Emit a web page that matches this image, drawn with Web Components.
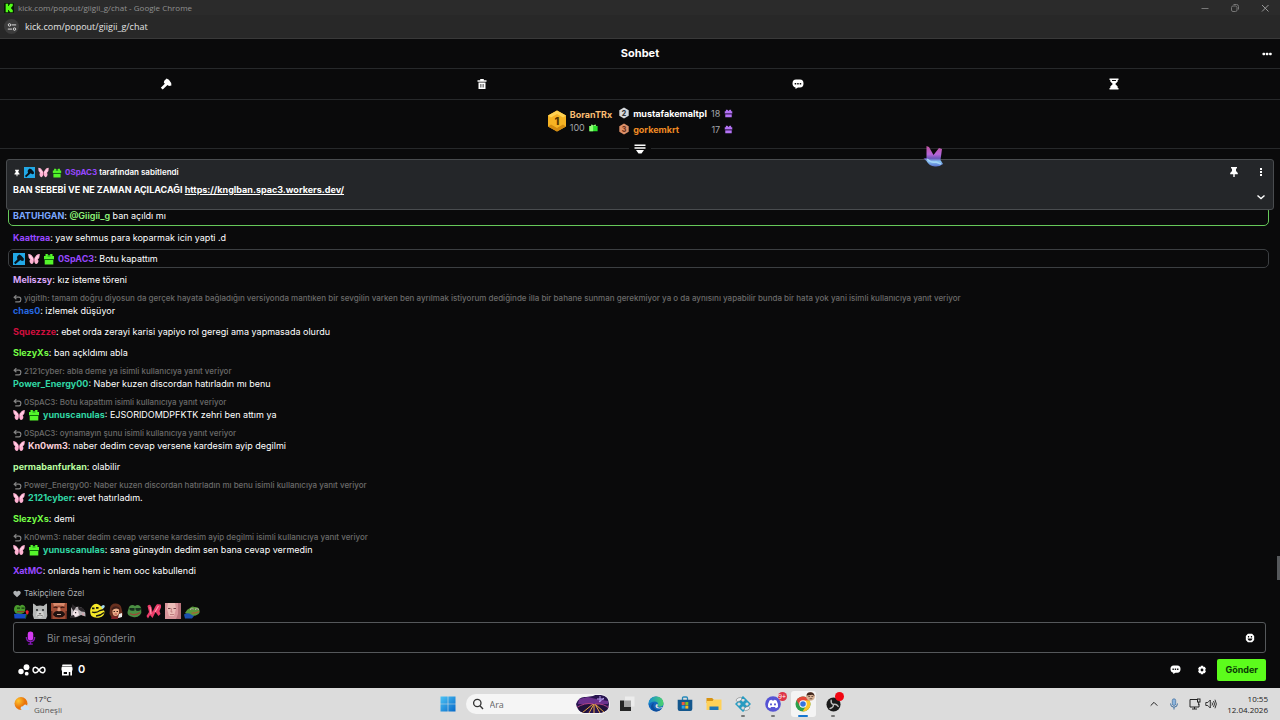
<!DOCTYPE html>
<html lang="tr">
<head>
<meta charset="utf-8">
<title>kick.com/popout/giigii_g/chat</title>
<style>
html, body { margin: 0; height: 100%; }
body { display: flex; flex-direction: column; min-height: 100vh; overflow: hidden; background: #0a0a0b; color: #fff; font-family: Inter, sans-serif; font-size: 9px; line-height: 13px; }
chat-feed { flex: 1; }
</style>
</head>
<body>
<window-chrome></window-chrome>
<chat-header>Sohbet</chat-header>
<mod-bar></mod-bar>
<gift-board></gift-board>
<pinned-message user="0SpAC3" href="https://knglban.spac3.workers.dev/">BAN SEBEBİ VE NE ZAMAN AÇILACAĞI</pinned-message>
<chat-feed>
  <chat-message user="BATUHGAN" color="#7aa7ff" frame="mention"><b>@Giigii_g</b> ban açıldı mı</chat-message>
  <chat-message user="Kaattraa" color="#9747ff">yaw sehmus para koparmak icin yapti .d</chat-message>
  <chat-message user="0SpAC3" color="#9747ff" badges="mod butterfly gift" frame="plain">Botu kapattım</chat-message>
  <chat-message user="Meliszsy" color="#d9a6f7">kız isteme töreni</chat-message>
  <chat-message user="chas0" color="#2668e0" reply="yigitlh: tamam doğru diyosun da gerçek hayata bağladığın versiyonda mantıken bir sevgilin varken ben ayrılmak istiyorum dediğinde illa bir bahane sunman gerekmiyor ya o da aynısını yapabilir bunda bir hata yok yani isimli kullanıcıya yanıt veriyor">izlemek düşüyor</chat-message>
  <chat-message user="Squezzze" color="#d00f3e">ebet orda zerayi karisi yapiyo rol geregi ama yapmasada olurdu</chat-message>
  <chat-message user="SlezyXs" color="#75fd46">ban açkldımı abla</chat-message>
  <chat-message user="Power_Energy00" color="#31d6a4" reply="2121cyber: abla deme ya isimli kullanıcıya yanıt veriyor">Naber kuzen discordan hatırladın mı benu</chat-message>
  <chat-message user="yunuscanulas" color="#31d6a4" badges="butterfly gift" reply="0SpAC3: Botu kapattım isimli kullanıcıya yanıt veriyor">EJSORIDOMDPFKTK zehri ben attım ya</chat-message>
  <chat-message user="Kn0wm3" color="#fbcfd8" badges="butterfly" reply="0SpAC3: oynamayın şunu isimli kullanıcıya yanıt veriyor">naber dedim cevap versene kardesim ayip degilmi</chat-message>
  <chat-message user="permabanfurkan" color="#b9fda0">olabilir</chat-message>
  <chat-message user="2121cyber" color="#31d6a4" badges="butterfly" reply="Power_Energy00: Naber kuzen discordan hatırladın mı benu isimli kullanıcıya yanıt veriyor">evet hatırladım.</chat-message>
  <chat-message user="SlezyXs" color="#75fd46">demi</chat-message>
  <chat-message user="yunuscanulas" color="#31d6a4" badges="butterfly gift" reply="Kn0wm3: naber dedim cevap versene kardesim ayip degilmi isimli kullanıcıya yanıt veriyor">sana günaydın dedim sen bana cevap vermedin</chat-message>
  <chat-message user="XatMC" color="#9747ff">onlarda hem ic hem ooc kabullendi</chat-message>
</chat-feed>
<chat-composer></chat-composer>
<task-bar></task-bar>
<crown-cursor></crown-cursor>

<script>
const svg = (box, body) => `<svg viewBox="0 0 ${box}" aria-hidden="true">${body}</svg>`;
const ICONS = {
  kick: svg('12 12', '<rect width="12" height="12" rx="1" fill="#061a05"/><path fill="#53fc18" d="M2 1h3v2.500h1v-1.500h1V1h3.500v3h-1v1h-1v2h1v1h1v3H7v-1H6V8.500H5V11H2z"/>'),
  tune: svg('12 12', '<g fill="none" stroke="#ddd" stroke-width="1.200"><path d="M5.500 3.500H11M1 8.500h5"/><circle cx="3" cy="3.500" r="1.500"/><circle cx="9" cy="8.500" r="1.500"/></g>'),
  min: svg('10 10', '<path d="M1.500 5.500h7" stroke="#777"/>'),
  restore: svg('10 10', '<g fill="none" stroke="#777"><rect x="1.500" y="3" width="5.500" height="5.500" rx="1.500"/><path d="M3.500 1.500h3q2 0 2 2v3"/></g>'),
  close: svg('10 10', '<path d="M2 2l6.500 6.500M8.500 2L2 8.500" stroke="#999" fill="none"/>'),
  dots: svg('12 12', '<g fill="#fff"><rect x="1.500" y="4.700" width="2.600" height="2.600" rx=".8"/><rect x="4.800" y="4.700" width="2.600" height="2.600" rx=".8"/><rect x="8.100" y="4.700" width="2.600" height="2.600" rx=".8"/></g>'),
  vdots: svg('12 12', '<g fill="#fff"><rect x="5" y="2" width="2" height="2"/><rect x="5" y="5" width="2" height="2"/><rect x="5" y="8" width="2" height="2"/></g>'),
  hammer: svg('12 12', '<path fill="#fff" d="M.8 9.800L4.800 5.800 3.800 4.600 4.300 2.800 6.600.5l2.300 1.300L11.200 5l.2 2.500-2.400.6-1.500-1-4.800 4.300z"/>'),
  trash: svg('12 12', '<path fill="#fff" fill-rule="evenodd" d="M4.200 1h3.600v1.200H10.500v1.500h-9V2.200h2.700zM2.500 4.500h7V11h-7zM4.500 6v3.500h.8V6zm2.200 0v3.500h.8V6z"/>'),
  bubble: svg('12 12', '<path fill="#fff" fill-rule="evenodd" d="M4 1.500h4Q11.500 1.500 11.500 5.500 11.500 9.500 8 9.500H6L3.500 11V9.500Q.5 8.700.5 5.500q0-4 3.500-4zM2.700 5v1.500h1.500V5zm2.500 0v1.500h1.500V5zm2.500 0v1.500h1.500V5z"/>'),
  hourglass: svg('12 12', '<path fill="#fff" fill-rule="evenodd" d="M1.500.5h9V2H9.700v1.500L7.200 6l2.500 2.500V10h.8v1.500h-9V10h.8V8.500L4.800 6 2.300 3.500V2h-.8zM3.900 2l.2 1h3.800l.2-1z"/>'),
  collapse: svg('12 12', '<path fill="#fff" d="M.5 1.500h11V3H.5zM.5 4.200h11v1.500h-11zM2 7h8L7.500 10.500h-3z"/>'),
  pin: svg('12 12', '<path fill="#fff" d="M3 1h6v1.500H8v2.500l1.800 2v1.200H6.700V11H5.300V8.200H2.200V7L4 5V2.500H3z"/>'),
  down: svg('12 12', '<path d="M2.500 4.500L6 7.500l3.500-3" fill="none" stroke="#fff" stroke-width="1.400"/>'),
  reply: svg('12 12', '<path d="M4.500 1.500L1.500 4.200l3 2.800M2 4.200H8q2.500 0 2.500 3T8 10.500H3" fill="none" stroke="#858585" stroke-width="1.500"/>'),
  heart: svg('12 12', '<path fill="#b0b3b6" d="M6 11L1.200 6.200Q-.5 3.500 1.500 1.700 4 .3 6 2.600 8 .3 10.500 1.700q2 1.800.3 4.500z"/>'),
  mod: svg('12 12', '<rect width="12" height="12" fill="#22a8e6"/><path fill="#07141c" d="M1 9.800L4.500 6.300 4 5 4.300 3.300 6.200 1.500l1.900 1L10.800 5.400v2L9 7.900 7.300 6.900 2.400 11.300z"/>'),
  butterfly: svg('12 12', '<path fill="#ffb3d3" d="M.3 1Q3 .5 5.300 4.500L6 6l.7-1.500Q9 .5 11.700 1q.3 4-2 5.500 1 .5.600 2.500-1 2.500-2.600 2Q6.500 10 6 8q-.5 2-1.700 3-1.600.5-2.600-2-.400-2 .600-2.500Q0 5 .3 1z"/><path d="M2 3l2.500 3.500M10 3L7.500 6.500" stroke="#fff0f6" stroke-width=".8"/><path d="M6 5v4" stroke="#8b3560" stroke-width=".8"/>'),
  gift: svg('12 12', '<path fill="#55f52b" d="M2.500 1h2L6 2.700 7.500 1h2v2H11V6H1V3h1.500zM1.700 7h8.600v4.500H1.700z"/><path d="M1 6.500h10" stroke="#0c7a08" stroke-width=".9"/><path d="M4.500 3h3" stroke="#16951a"/>'),
  giftPurple: svg('12 12', '<path fill="#b473f5" d="M2.500 1h2L6 2.700 7.500 1h2v2H11V6H1V3h1.500zM1.700 7h8.600v4H1.700z"/><path d="M1 6.500h10" stroke="#562385"/>'),
  giftWide: svg('12 12', '<path fill="#2be02c" d="M.5 4h11v7H.5z"/><path fill="#8dff74" d="M3.500 1.500L6 3.200l2.500-1.700 1 2.500h-7zM.5 4h5v7h-5z"/>'),
  rank1: svg('20 22', '<path fill="#f6b323" d="M10 .5l9 5v11l-9 5-9-5v-11z"/><path fill="#ffd252" d="M10 .5l9 5-3 2-6-3.500-6 3.500-3-2z"/><path fill="#d38b11" d="M1 16.500l3-2 6 3.500 6-3.500 3 2-9 5z"/><text x="10" y="15" text-anchor="middle" font-family="Inter" font-size="11" font-weight="800" fill="#573600">1</text>'),
  rank2: svg('10 12', '<path fill="#d5d8dc" d="M5 .5l4.700 2.700v5.600L5 11.500.3 8.800V3.200z"/><text x="5" y="8.500" text-anchor="middle" font-family="Inter" font-size="7" font-weight="800" fill="#34383b">2</text>'),
  rank3: svg('10 12', '<path fill="#dc8f68" d="M5 .5l4.700 2.700v5.600L5 11.500.3 8.800V3.200z"/><text x="5" y="8.500" text-anchor="middle" font-family="Inter" font-size="7" font-weight="800" fill="#6d321c">3</text>'),
  mic: svg('12 16', '<rect x="3" y=".8" width="6" height="10" rx="3" fill="#d53bf2"/><path d="M1.500 7q0 5 4.500 5t4.500-5M6 12v2.500M3.500 14.700h5" fill="none" stroke="#8618b8" stroke-width="1.500"/>'),
  smile: svg('12 12', '<path fill="#fff" fill-rule="evenodd" d="M3.500 1h5L11 3.500v5L8.500 11h-5L1 8.500v-5zM3.500 3.700v1.800h1.500V3.700zm3.500 0v1.800h1.500V3.700zM3 6.500Q3.700 9.300 6 9.300t3-2.800z"/>'),
  gear: svg('12 12', '<path fill="#fff" fill-rule="evenodd" d="M4.600 1h2.800l.4 1.500 1.500-.3 1.400 2.300L9.700 6l1 1.500-1.400 2.300-1.500-.3L7.400 11H4.600l-.4-1.500-1.500.3-1.400-2.300 1-1.500-1-1.500 1.400-2.300 1.500.3zM6 4.300A1.700 1.700 0 1 0 6 7.700 1.700 1.700 0 1 0 6 4.300z"/>'),
  points: svg('12 12', '<g fill="#fff"><circle cx="8.500" cy="3.200" r="2.900"/><circle cx="3" cy="7.500" r="2.700"/><circle cx="8.700" cy="9.700" r="1.900"/></g>'),
  infinity: svg('14 10', '<path d="M7 5Q4.500 1.500 2.700 2.300 1 3 1 5t1.700 2.700Q4.500 8.500 7 5t4.300-2.700Q13 3 13 5t-1.700 2.700Q9.500 8.500 7 5z" fill="none" stroke="#fff" stroke-width="1.500"/>'),
  shop: svg('12 12', '<path fill="#fff" fill-rule="evenodd" d="M1.500.5h9L11.500 4v2.500H11v5H9.300V8H7.800v3.500H1V6.500H.5V4zM2.700 8v2h3.300V8z"/><path d="M1 2.500h10" stroke="#0a0a0b" stroke-width=".5"/>'),
  sun: svg('16 16', '<defs><radialGradient id="s" cx=".3" cy=".3"><stop offset="0" stop-color="#ffc62e"/><stop offset="1" stop-color="#e9750d"/></radialGradient></defs><circle cx="7" cy="7.500" r="6.500" fill="url(#s)"/><path fill="#cfe2f6" d="M8 14q-2-.5-1.300-2.500Q7.500 10 9 10.300 10 8 12 8.700q1.800.7 1.700 2.300Q16 11.500 15 14z"/>'),
  windows: svg('16 16', '<defs><linearGradient id="w" x2="1" y2="1"><stop stop-color="#4cc3f5"/><stop offset="1" stop-color="#0669c9"/></linearGradient></defs><path fill="url(#w)" d="M.5.5h7.200v7.200H.5zM8.300.5h7.200v7.200H8.300zM.5 8.300h7.200v7.200H.5zM8.300 8.300h7.200v7.200H8.300z"/>'),
  search: svg('12 12', '<g fill="none" stroke="#333" stroke-width="1.300"><circle cx="5.300" cy="5" r="3.700"/><path d="M8 7.700l3 3.300"/></g>'),
  scene: svg('34 18', '<defs><clipPath id="sc"><path d="M0 9Q3 1 10 2l7-1q3-2 8-1 8 1 8 9 0 8-9 9H8Q1 16 0 9z"/></clipPath></defs><g clip-path="url(#sc)"><path fill="#281550" d="M0 0h34v18H0z"/><path fill="#6b318e" d="M3 4l9-2 8 2 12 2v3H2z"/><path fill="#20123c" d="M2 12q8-5 15-2l-7 8H4zM20 10q8-1 13 5l-8 3z"/><path d="M17 9L6 18M18 9l-5 9M18 9v9M19 9l5 9M19 9l10 9" stroke="#eba842"/><path d="M0 13Q9 7 17 9M19 9q9-1 15 5" stroke="#b04383" fill="none"/><path d="M24 1v6M21 4h7M28 3l-5 4" stroke="#b99ef0"/></g>'),
  desk: svg('16 16', '<path fill="#ececec" d="M6 .5h9.500v10H6z"/><path fill="#252525" d="M1 4.500h4v6.500h7v4H1z"/><path fill="#a5a5a5" d="M5 4.500h7V11H5z"/>'),
  edge: svg('16 16', '<defs><linearGradient id="e" x2="1"><stop stop-color="#168ed3"/><stop offset="1" stop-color="#4bd36a"/></linearGradient></defs><circle cx="8" cy="8" r="7.500" fill="#1266bd"/><path fill="url(#e)" d="M.5 8Q1 .5 8 .5q7 .3 7.500 6.500.2 3.500-4 3.700-2 0-1.800-1.300Q11 6 7 5.500 2 5.500.5 9z"/><path fill="#0e4c9a" d="M6 7q-2 4 1.500 6.200 3 1.800 6-.2-3 3.500-7.500 2Q1.500 12.500 3.500 9 4.500 7.200 6 7z"/><path fill="#dcdcdc" d="M9.500 8q.7 1.300-.2 2.500.8 1.500 3.700 1 1.500-.3 2.500-1-1 2-4 2Q7.500 12.500 7.500 10q0-2 2-2z"/>'),
  store: svg('16 16', '<path d="M5.500 4V2.200Q5.500 1 6.700 1h2.600q1.200 0 1.200 1.200V4" fill="none" stroke="#2689ba" stroke-width="1.300"/><path fill="#14578d" d="M.7 3.700h14.600V13q0 2-2 2H2.700q-2 0-2-2z"/><path fill="#f25a3c" d="M4.700 6h3v3h-3z"/><path fill="#84bd22" d="M8.300 6h3v3h-3z"/><path fill="#2ba5e9" d="M4.700 9.600h3v3h-3z"/><path fill="#fcbd22" d="M8.300 9.600h3v3h-3z"/>'),
  folder: svg('16 16', '<path fill="#d89311" d="M.5 2h5.700l1.300 1.500V7h-7z"/><path fill="#ffd158" d="M.5 5h6l1.500-1.500h7.500V14H.5z"/><path fill="#2076b6" d="M3.500 10.500h9V14h-9z"/>'),
  knot: svg('16 16', '<g fill="none" stroke="#279bc1" stroke-width="1.500"><path d="M8 1l3 3-3 3-3-3zM12 5l3 3-3 3-3-3zM8 9l3 3-3 3-3-3zM4 5l3 3-3 3-3-3z"/></g><g fill="#e9eef1" stroke="#777" stroke-width=".5"><ellipse cx="4" cy="3.500" rx="3" ry="1.700" transform="rotate(-25 4 3.500)"/><ellipse cx="12" cy="12.500" rx="3" ry="1.700" transform="rotate(-25 12 12.500)"/></g>'),
  discord: svg('16 16', '<circle cx="8" cy="8" r="7.800" fill="#5654d4"/><path fill="#fff" fill-rule="evenodd" d="M4.500 4.500l2-.8.500.8h2l.5-.8 2 .8Q13.300 7.500 13 11q-1 .9-2.300 1.200l-.7-1.100H6l-.7 1.100Q4 12 3 11q-.3-3.500 1.500-6.500zM6 7.300A1 1.100 0 1 0 6 9.500 1 1.100 0 1 0 6 7.300zm4 0a1 1.100 0 1 0 0 2.200 1 1.100 0 1 0 0-2.200z"/>'),
  chrome: svg('16 16', '<circle cx="8" cy="8" r="7.500" fill="#2da04b"/><path fill="#e6483a" d="M1.500 4.200Q4 .5 8 .5t6.500 3.800L8 6z"/><path fill="#e6483a" d="M1.500 4.200L5 10l3-4z"/><path fill="#fac42a" d="M14.500 4.300Q17 9 13.500 13q-2.500 2.700-6 2.500L11 10l-1.500-5.500z"/><circle cx="8" cy="8" r="3.700" fill="#fff"/><circle cx="8" cy="8" r="2.800" fill="#3474df"/>'),
  avatar: svg('10 10', '<circle cx="5" cy="5" r="4.800" fill="#d9b294"/><path fill="#40271e" d="M.5 4Q1 0 5 .2q4 0 4.500 4.300L7 3 3 3.500z"/><path d="M2.500 5h2M6 5h2M4 7.500h3" stroke="#2a1714" stroke-width=".7"/>'),
  obs: svg('16 16', '<circle cx="8" cy="8" r="7.500" fill="#1a1a1a"/><g fill="none" stroke="#bdbdbd" stroke-width="1.500" stroke-linecap="round"><path d="M8 8Q5 7 5.500 3.500M8 8q3-1 5 2M8 8q0 3.500-3.700 4.200"/></g>'),
  chevUp: svg('12 12', '<path d="M2 8l4-4 4 4" fill="none" stroke="#222" stroke-width="1.200"/>'),
  trayMic: svg('12 12', '<rect x="4.300" y=".8" width="3.400" height="6.700" rx="1.700" fill="#8db4dc" stroke="#3e6e9f" stroke-width=".7"/><path d="M2.500 5.500q0 3.700 3.500 3.700t3.500-3.700M6 9.200v2.300" fill="none" stroke="#3e6e9f"/>'),
  net: svg('12 12', '<g fill="none" stroke="#222"><path d="M8 1.500H1v7.500h9V6M3 11h5M5.500 9v2"/><rect x="8.500" y="1" width="2.500" height="3"/><path d="M9.700 4v3"/></g>'),
  sound: svg('12 12', '<g fill="none" stroke="#222" stroke-width=".9"><path d="M.8 4.500h2L5.300 2v8L2.800 7.500h-2zM7 4.500q1 1.500 0 3M8.500 3q2 3 0 6M10 1.700q2.700 4.300 0 8.600"/></g>'),
  e1: svg('16 16', '<path fill="#4a9b2d" d="M1 6Q1.500 2 4.500 2 6 2 7 3q2-2 4-.5 2 1.500 1 4.500 0 4-6 4-5 0-5-5z"/><path fill="#1649c4" d="M1 11q5-1 7 0h5v4.500H1.500z"/><path fill="#163c10" d="M4 4.500h3v1.200H4zm4.500 0h3v1.200h-3z"/><path d="M4 8.700h7" stroke="#8c3d20" stroke-width="1.200"/><path fill="#e91f33" d="M12.500 8q2-1.500 3.300.5Q16 11 13.500 12z"/><path d="M13.500 11l-1 4" stroke="#1f6e22"/>'),
  e2: svg('16 16', '<path fill="#b6b8b7" d="M1 .5Q3 1 4.500 3q3.500-1 7 0Q13 1 15 .5V9q1 4-1 7H2Q0 12 1 9z"/><path fill="#d3d4d2" d="M5 9q3-2 6 0l1 4-4 2-4-2z"/><circle cx="5" cy="7" r="1.100" fill="#2c2f30"/><circle cx="11" cy="7" r="1.100" fill="#2c2f30"/><path d="M6.500 10h3L8 11.300z" fill="#5b5555"/><path d="M5 13q3-2 6 0" stroke="#777" fill="none" stroke-width=".8"/>'),
  e3: svg('16 16', '<path fill="#a14e36" d="M0 0h16v16H0z"/><path fill="#d98a6c" d="M2 0h12l-1 3.500q-5-2-10 0z"/><path d="M2.500 4.500q2.500-1 4 .5M9.500 5q1.500-1.500 4-.5" stroke="#3b1812" fill="none" stroke-width="1.200"/><path fill="#1f1210" d="M2.500 10q2.500-3 5.500-1.500 3-1.500 5.500 1.500l.5 2q-2 2.500-6 2.500T2 12z"/><path fill="#c9a596" d="M6 11h4v1H6z"/><path fill="#df987b" d="M6.800 4.500h2.400L9.700 8H6.300z"/><path fill="#63281c" d="M0 8h1.500v8H0zM14.500 8H16v8h-1.500z"/>'),
  e4: svg('16 16', '<path fill="#b7b0b4" d="M1 5Q3 3 6 4q5-1 8 3 2 3 1.500 6.500L11 12l-4 2-6 1z"/><path fill="#2a2629" d="M2.500 1L6 4.500 3.500 8 1.500 5zM8 3.500l5 1.500 2.500 4-4-.5-3-2z"/><path fill="#f5e6ea" d="M4.500 7L8 8l1 4-4 2-2.500-3z"/><path fill="#2d282c" d="M5 9h1.200v1.200H5zM0 13l4-1 1 3H0z"/><path fill="#e59aa7" d="M12 10l2 1-1 2z"/>'),
  e5: svg('16 16', '<path fill="#f5e829" d="M3 3q4-4 8-.5 3.500 2 4.500 6 0 5-5 6-5 1-8-1.500Q-.5 8 3 3z"/><path fill="#151611" d="M3 4.500h2.500v1.800H3zM7 4h2.500v1.800H7z"/><path d="M3 9q4 1.500 8-1.500l4-1M7 13q5-.5 8-3.500" stroke="#151611" fill="none" stroke-width="1.300"/><path fill="#a4d9ed" d="M12 3.500q2-2.500 3.500-1 1 2-2 3.500z"/>'),
  e6: svg('16 16', '<path fill="#68301f" d="M2 5Q3 0 8 .5q5 .5 5.500 5L15 12l-3 3H4l-2.500-4z"/><path fill="#eeb08b" d="M4.500 6q3-2 6.500 0v4q-1 3-3.500 3T4.500 9.500z"/><path fill="#41201a" d="M3.500 5.500Q7 1.500 12 5l-.5 2Q8 4 4 7.500zM5.500 8h1.500v1H5.500zm3 0H10v1H8.500z"/><path d="M6.500 11h2.500" stroke="#b34548"/><path fill="#eee" d="M11 11l3-1v4l-4 1z"/><path fill="#7f2327" d="M4 13l4 1 2-1v3H3z"/>'),
  e7: svg('16 16', '<path fill="#4b8f43" d="M1.500 6Q2 2 5.500 2 7 2 8 3q2.500-2 5 0 1.500 1.500 1.200 4 .8 3-1.200 5-3 3-7 2Q0 13 .5 9z"/><path fill="#17301d" d="M2.500 5h5v2.500q-4 1-5-1zM8.500 5h5.700q0 3-3.200 3-2 0-2.500-1.500z"/><path d="M3 10.500q5 3 10-1" stroke="#9d4636" fill="none" stroke-width="1.300"/>'),
  e8: svg('16 16', '<path fill="#ec3e6b" d="M1.500 3Q4 0 5.500 4l1 5L9 4q2-4 4-2.500 2.500-1 2 3L13.500 8l1 3-2 2-1.500-2-1.500-2L6.500 15 4 12 2 15.500.5 13 3 9z"/><path d="M4 4l1 7M12.500 3L9 9" stroke="#ff9db2" stroke-width="1.100"/>'),
  e9: svg('16 16', '<path fill="#d9969b" d="M0 0h16v16H0z"/><path fill="#ecbdb8" d="M3 0h7l1 6-2 7H4L2 6z"/><path d="M3 5.500h2.500M8.500 5.500H11" stroke="#77444b"/><path d="M6.500 5.500L6 9h1.500M5 11.500h4" stroke="#b26c6e" fill="none" stroke-width=".8"/><path fill="#b8747b" d="M13 0h3v16h-5l2-5z"/>'),
  e10: svg('16 16', '<path fill="#5a993d" d="M1 10q2-4 5-5 2-2.500 4.500-1 3.500-.500 4.500 2 1.500 3-.5 5-3 2.500-7 2z"/><path fill="#1b4fad" d="M0 11.500q4-2.500 7 0l3 1.500-2 2.500H1z"/><path fill="#eef0d5" d="M6.500 5.500h3V7h-3zm5 0h3V7h-3z"/><path d="M7 6.300h2.500M12 6.300h2" stroke="#1d2a17" stroke-width=".7"/><path d="M7.500 10q4 .5 7.500-1.500" fill="none" stroke="#b15c34" stroke-width="1.200"/>'),
  crown: svg('22 24', '<defs><linearGradient id="c" x2="0" y2="1"><stop stop-color="#c0549e"/><stop offset=".4" stop-color="#b765d8"/><stop offset=".6" stop-color="#6b57b8"/><stop offset=".75" stop-color="#86c2f2"/><stop offset="1" stop-color="#5870cf"/></linearGradient></defs><path fill="url(#c)" d="M3.500 2L6 3l4.500 8L16 4l3 1-1.500 11 2.500 4q-4 3-8 2.500Q6 22 3.500 17L.5 14.500l3-.5z"/><path d="M4 15q4 4 9 3l5 2" stroke="#a6d5f7" stroke-width="1.500" fill="none"/>')
};

const RESET = `
  *, *::before { box-sizing: border-box; }
  :host { display: block; box-sizing: border-box; }
  button { display: inline-flex; align-items: center; justify-content: center; margin: 0; padding: 0; border: 0; background: none; color: inherit; font: inherit; }
  input { min-width: 0; margin: 0; padding: 0; border: 0; outline: 0; background: none; color: inherit; font: inherit; }
  a { color: inherit; }
`;

class View extends HTMLElement {
  connectedCallback() {
    if (this.shadowRoot) return;
    this.attachShadow({ mode: 'open' }).innerHTML = `<style>${RESET}${this.css()}</style>${this.html()}`;
  }
  css() { return ''; }
  html() { return '<slot></slot>'; }
}

customElements.define('k-icon', class extends View {
  css() {
    const size = this.getAttribute('size') || 12;
    const height = this.getAttribute('height') || size;
    return `:host { display: inline-block; flex: none; width: ${size}px; height: ${height}px; } svg { display: block; width: 100%; height: 100%; }`;
  }
  html() { return ICONS[this.getAttribute('name')]; }
});

customElements.define('window-chrome', class extends View {
  css() { return `
    :host { background: #2b2b2b; font-family: "Open Sans", sans-serif; border-bottom: 1px solid #393939; }
    .title { display: flex; align-items: center; height: 15px; padding: 0 10px 0 4px; gap: 4px; color: #919191; font-size: 8px; }
    .title span { flex: 1; }
    .buttons { display: flex; gap: 20px; }
    .address { display: flex; align-items: center; height: 23px; padding-left: 4px; gap: 6px; background: #282828; color: #e3e3e3; font-size: 9px; }
    .site { width: 15px; height: 15px; border-radius: 50%; background: #3c3c3c; }
    input { flex: 1; }`; }
  html() { return `
    <div class="title"><k-icon name="kick" size="10"></k-icon><span>kick.com/popout/giigii_g/chat - Google Chrome</span>
      <div class="buttons"><button aria-label="Simge durumuna küçült"><k-icon name="min" size="10"></k-icon></button><button aria-label="Önceki boyut"><k-icon name="restore" size="10"></k-icon></button><button aria-label="Kapat"><k-icon name="close" size="10"></k-icon></button></div></div>
    <div class="address"><button class="site" aria-label="Site bilgileri"><k-icon name="tune" size="10"></k-icon></button><input aria-label="Adres" value="kick.com/popout/giigii_g/chat"></div>`; }
});

customElements.define('chat-header', class extends View {
  css() { return `
    :host { display: grid; grid-template-columns: 1fr auto 1fr; align-items: center; height: 30px; padding: 0 7px; border-bottom: 1px solid #27292b; }
    h1 { grid-column: 2; margin: 0; font-size: 11px; font-weight: 700; }
    button { justify-self: end; }`; }
  html() { return `<h1><slot></slot></h1><button aria-label="Diğer"><k-icon name="dots"></k-icon></button>`; }
});

customElements.define('mod-bar', class extends View {
  css() { return `:host { display: grid; grid-template-columns: repeat(4, 1fr); height: 31px; padding: 0 8px; border-bottom: 1px solid #27292b; }`; }
  html() { return [['hammer', 'Yasakla'], ['trash', 'Sil'], ['bubble', 'Sohbet modu'], ['hourglass', 'Zaman aşımı']]
    .map(([icon, label]) => `<button aria-label="${label}"><k-icon name="${icon}"></k-icon></button>`).join(''); }
});

customElements.define('gift-board', class extends View {
  css() { return `
    .board { display: flex; justify-content: center; align-items: center; gap: 7px; height: 42px; font-size: 9px; }
    .first { display: flex; align-items: center; gap: 3px; }
    .count { display: flex; align-items: center; gap: 4px; color: #a3a6aa; }
    b { font-weight: 700; }
    .first b { color: #f9bd73; display: block; }
    .rest { display: grid; grid-template-columns: auto auto auto; align-items: center; column-gap: 4px; row-gap: 3px; }
    .orange { color: #f08a24; }
    .rest .count { justify-content: flex-end; }
    .fold { display: flex; align-items: center; gap: 5px; height: 13px; }
    .fold::before, .fold::after { content: ""; flex: 1; height: 1px; background: #27292b; }`; }
  html() { return `
    <div class="board"><div class="first"><k-icon name="rank1" size="20" height="22"></k-icon><div><b>BoranTRx</b><span class="count">100 <k-icon name="giftWide" size="9"></k-icon></span></div></div>
      <div class="rest"><k-icon name="rank2" size="10" height="12"></k-icon><b>mustafakemaltpl</b><span class="count">18 <k-icon name="giftPurple" size="9"></k-icon></span>
      <k-icon name="rank3" size="10" height="12"></k-icon><b class="orange">gorkemkrt</b><span class="count">17 <k-icon name="giftPurple" size="9"></k-icon></span></div></div>
    <div class="fold"><button aria-label="Sıralamayı aç"><k-icon name="collapse"></k-icon></button></div>`; }
});

customElements.define('pinned-message', class extends View {
  css() { return `
    :host { display: flex; justify-content: space-between; height: 51px; margin: 4px 6px 0; padding: 6px; background: #242629; border: 1px solid #494c4f; border-radius: 3px; }
    .by { display: flex; align-items: center; gap: 3px; font-size: 8px; font-weight: 600; }
    .by b { color: #9747ff; font-weight: 700; }
    p { margin: 4px 0 0; font-size: 9px; font-weight: 700; }
    .tools { display: grid; grid-template-columns: auto auto; column-gap: 15px; align-content: space-between; }
    .tools button:last-child { grid-column: 2; }`; }
  html() { const href = this.getAttribute('href'); return `
    <div><div class="by"><k-icon name="pin" size="8"></k-icon><k-icon name="mod" size="11"></k-icon><k-icon name="butterfly" size="11"></k-icon><k-icon name="gift" size="10"></k-icon><span><b>${this.getAttribute('user')}</b> tarafından sabitlendi</span></div>
    <p><slot></slot> <a href="${href}">${href}</a></p></div>
    <div class="tools"><button aria-label="Sabitlemeyi kaldır"><k-icon name="pin"></k-icon></button><button aria-label="Seçenekler"><k-icon name="vdots"></k-icon></button><button aria-label="Genişlet"><k-icon name="down"></k-icon></button></div>`; }
});

customElements.define('chat-feed', class extends View {
  css() { return `
    :host { position: relative; display: flex; flex-direction: column; justify-content: flex-end; min-height: 0; overflow: hidden; padding: 0 11px 0 8px; }
    .thumb { position: absolute; right: 0; bottom: 1px; width: 3px; height: 24px; background: #55585b; }`; }
  html() { return `<slot></slot><i class="thumb"></i>`; }
});

customElements.define('chat-message', class extends View {
  css() { return `
    :host { flex: none; padding: 4px 5px; font-weight: 400; }
    :host([reply]) { padding-top: 2px; }
    :host([frame]) { margin: 1px 0; padding: 2px 4px; border: 1px solid #3c3f42; border-radius: 5px; }
    :host([frame="mention"]) { padding-bottom: 3px; border-color: #66c85a; }
    .line, .reply { display: flex; align-items: center; gap: 3px; }
    .reply { height: 12px; color: #6a6a6a; font-size: 8px; font-weight: 500; gap: 2px; white-space: nowrap; }
    .user { color: ${this.getAttribute('color')}; font-weight: 700; }
    ::slotted(b) { color: #8ff57a; font-weight: 600; }`; }
  html() {
    const reply = this.getAttribute('reply');
    const badges = (this.getAttribute('badges') || '').split(' ').filter(Boolean);
    return `${reply ? `<div class="reply"><k-icon name="reply" size="9"></k-icon><span>${reply}</span></div>` : ''}
      <div class="line">${badges.map(b => `<k-icon name="${b}"></k-icon>`).join('')}<span><span class="user">${this.getAttribute('user')}</span>: <slot></slot></span></div>`;
  }
});

customElements.define('chat-composer', class extends View {
  css() { return `
    :host { padding: 6px 14px 2px 13px; }
    .mode { display: flex; align-items: center; gap: 3px; color: #aeb1b4; font-size: 8px; }
    .emotes { display: flex; gap: 3px; margin: 3px 0; }
    .field { display: flex; align-items: center; gap: 11px; height: 31px; padding: 0 10px 0 11px; border: 1px solid #55585b; border-radius: 3px; font-size: 10px; }
    input { flex: 1; height: 20px; }
    input::placeholder { color: #85888b; opacity: 1; }
    .actions { display: flex; align-items: center; height: 33px; padding-left: 5px; font-size: 11px; font-weight: 600; }
    .points { gap: 2px; margin-right: 15px; }
    .shop { gap: 5px; margin-right: auto; }
    .round { margin-right: 16px; }
    .send { height: 22px; padding: 0 8px; border-radius: 2px; background: #5cfc1c; color: #0a3a05; font-size: 9px; font-weight: 700; }
    .round + .round { margin-right: 10px; }`; }
  html() { return `
    <div class="mode"><k-icon name="heart" size="8"></k-icon>Takipçilere Özel</div>
    <div class="emotes">${Array.from({ length: 10 }, (_, i) => `<button aria-label="İfade ${i + 1}"><k-icon name="e${i + 1}" size="16"></k-icon></button>`).join('')}</div>
    <div class="field"><k-icon name="mic" size="11" height="16"></k-icon><input aria-label="Mesaj" placeholder="Bir mesaj gönderin"><button aria-label="İfadeler"><k-icon name="smile" size="10"></k-icon></button></div>
    <div class="actions"><button class="points" aria-label="Puanlar"><k-icon name="points"></k-icon><k-icon name="infinity" size="14" height="10"></k-icon></button><button class="shop"><k-icon name="shop"></k-icon>0</button>
    <button class="round" aria-label="Sohbet"><k-icon name="bubble" size="11"></k-icon></button><button class="round" aria-label="Ayarlar"><k-icon name="gear" size="10"></k-icon></button><button class="send">Gönder</button></div>`; }
});

customElements.define('task-bar', class extends View {
  css() { return `
    :host { display: grid; grid-template-columns: 1fr auto 1fr; align-items: center; height: 32px; padding: 0 12px; background: #dcdcdc; color: #222; font-family: "Open Sans", sans-serif; font-size: 8px; line-height: 11px; }
    .weather { display: flex; align-items: center; gap: 4px; justify-self: start; padding-left: 2px; text-align: left; }
    small { display: block; font-size: 8px; color: #555; }
    .apps { display: flex; align-items: center; gap: 5px; }
    .apps > button { position: relative; width: 24px; height: 26px; }
    .apps > .start { width: 26px; }
    .apps > .run { width: 25px; }
    .run::after { content: ""; position: absolute; bottom: 0; width: 4px; height: 2px; border-radius: 1px; background: #777; }
    .active { background: #f4f4f4; border-radius: 3px; }
    .active::after { width: 10px; background: #1577cf; }
    .badge { position: absolute; right: -1px; top: 1px; min-width: 9px; height: 9px; border-radius: 5px; background: #de3347; color: #fff; font-size: 7px; line-height: 9px; }
    .rec { right: 2px; background: #f20612; }
    .face { position: absolute; right: 1px; top: 1px; }
    .search { display: flex; align-items: center; gap: 6px; width: 144px; height: 20px; padding: 0 0 0 6px; border-radius: 10px; background: #f5f5f5; font-size: 9px; }
    .search input { flex: 1; }
    .search input::placeholder { color: #666; opacity: 1; }
    .tray { display: flex; align-items: center; justify-self: end; text-align: right; gap: 9px; }
    .status { gap: 4px; }
    .clock { display: block; margin-left: 1px; text-align: right; }`; }
  html() { return `
    <button class="weather"><k-icon name="sun" size="16"></k-icon><span>17°C<small>Güneşli</small></span></button>
    <div class="apps"><button class="start" aria-label="Başlat"><k-icon name="windows" size="16"></k-icon></button>
      <label class="search"><k-icon name="search"></k-icon><input aria-label="Ara" placeholder="Ara"><k-icon name="scene" size="34" height="18"></k-icon></label>
      <button aria-label="Görev görünümü"><k-icon name="desk" size="16"></k-icon></button><button aria-label="Edge"><k-icon name="edge" size="16"></k-icon></button><button aria-label="Mağaza"><k-icon name="store" size="16"></k-icon></button><button aria-label="Dosyalar"><k-icon name="folder" size="16"></k-icon></button>
      <button class="run" aria-label="Uygulama"><k-icon name="knot" size="16"></k-icon></button><button class="run"><k-icon name="discord" size="16"></k-icon><span class="badge">9+</span></button><button class="run active" aria-label="Chrome"><k-icon name="chrome" size="16"></k-icon><k-icon class="face" name="avatar" size="9"></k-icon></button><button class="run" aria-label="OBS"><k-icon name="obs" size="15"></k-icon><i class="badge rec"></i></button></div>
    <div class="tray"><button aria-label="Gizli simgeler"><k-icon name="chevUp" size="10"></k-icon></button><button aria-label="Mikrofon"><k-icon name="trayMic"></k-icon></button><button class="status" aria-label="Ağ ve ses"><k-icon name="net"></k-icon><k-icon name="sound"></k-icon></button><button class="clock">10:55<br>12.04.2026</button></div>`; }
});

customElements.define('crown-cursor', class extends View {
  css() { return `:host { position: absolute; left: 923px; top: 144px; }`; }
  html() { return `<k-icon name="crown" size="22" height="24"></k-icon>`; }
});
</script>
</body>
</html>
